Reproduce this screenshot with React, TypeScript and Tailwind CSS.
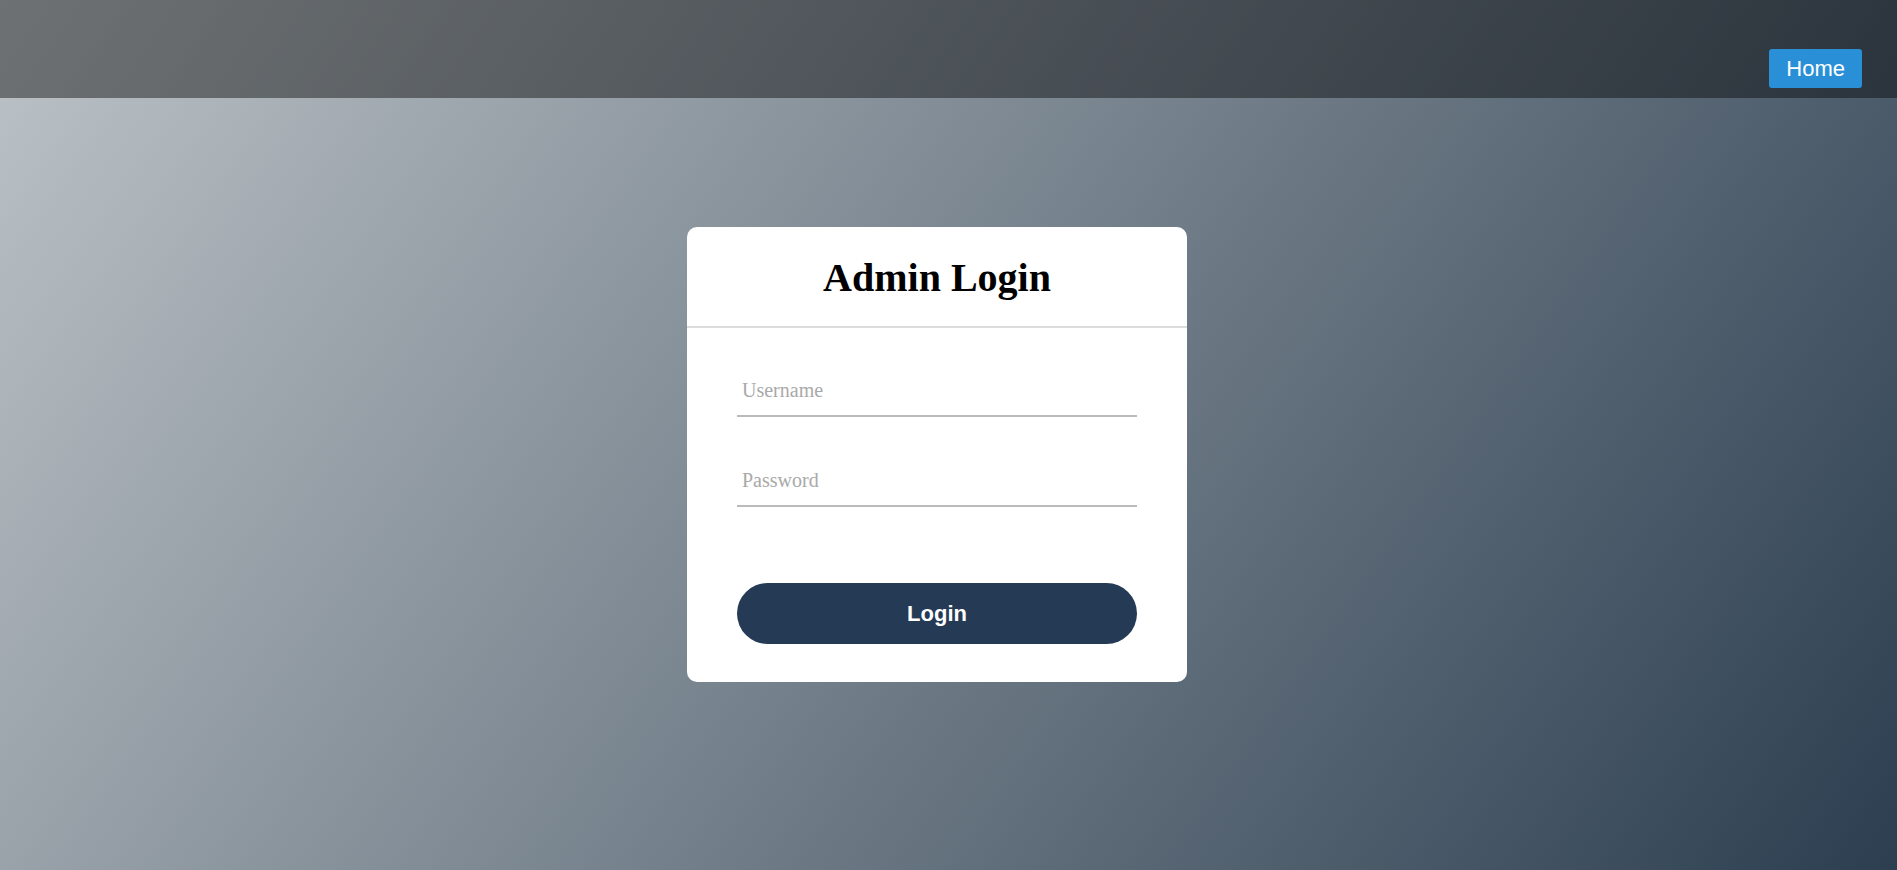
import { useState } from "react";

export default function App() {
  const [username, setUsername] = useState("");
  const [password, setPassword] = useState("");

  return (
    <div className="min-h-[870px] bg-[linear-gradient(125deg,#bdc3c7,#2c3e50)] font-['Liberation_Serif',serif]">
      <header className="flex h-[98px] items-end justify-end bg-[rgba(0,0,0,0.42)] pb-[10px] pr-[35px]">
        <button className="rounded-[3px] bg-[#2990d8] px-[17px] py-[7px] font-['Liberation_Sans',Arial,sans-serif] text-[22px] leading-[25px] text-white">
          Home
        </button>
      </header>

      <div className="flex justify-center pr-[23px] pt-[129px]">
        <div className="w-[500px] rounded-[10px] bg-white">
          <div className="border-b-2 border-[#dcdcdc] pb-[26px] pt-[29px] text-center">
            <h2 className="text-[40px] font-bold leading-[44px] text-black">Admin Login</h2>
          </div>

          <form
            className="flex flex-col px-[50px] pb-[38px] pt-[37px]"
            onSubmit={(e) => e.preventDefault()}
          >
            <input
              type="text"
              placeholder="Username"
              value={username}
              onChange={(e) => setUsername(e.target.value)}
              className="w-full border-b-2 border-[#bbbbbb] px-[5px] py-[14px] text-[20px] leading-[22px] text-black outline-none placeholder:text-[#a9a9a9]"
            />
            <input
              type="password"
              placeholder="Password"
              value={password}
              onChange={(e) => setPassword(e.target.value)}
              className="mt-[38px] w-full border-b-2 border-[#bbbbbb] px-[5px] py-[14px] text-[20px] leading-[22px] text-black outline-none placeholder:text-[#a9a9a9]"
            />
            <button
              type="submit"
              className="mt-[76px] h-[61px] w-full rounded-full bg-[#243a55] font-['Liberation_Sans',Arial,sans-serif] text-[22px] font-bold text-white"
            >
              Login
            </button>
          </form>
        </div>
      </div>
    </div>
  );
}
